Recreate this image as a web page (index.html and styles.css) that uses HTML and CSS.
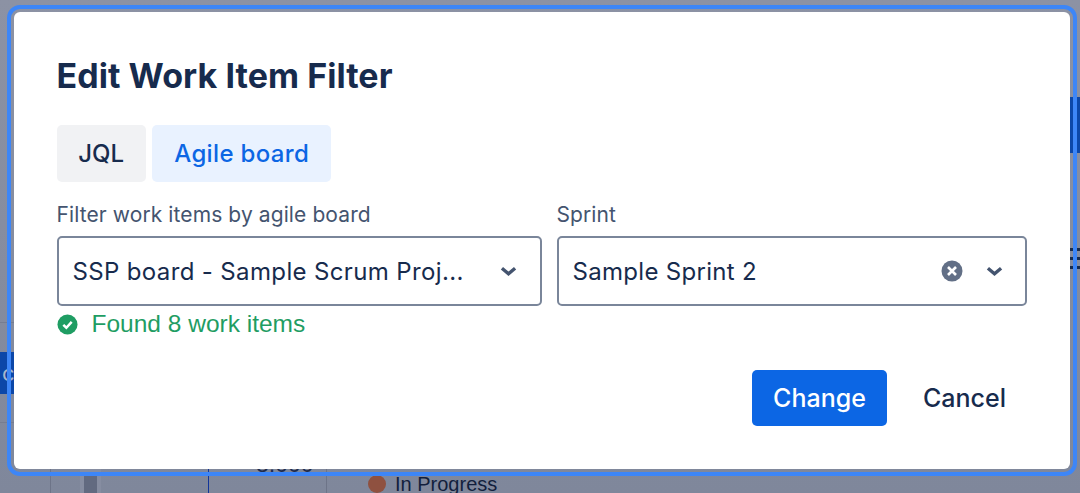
FILE: index.html
```html
<!DOCTYPE html>
<html lang="en">
<head>
<meta charset="utf-8">
<title>Edit Work Item Filter</title>
<link rel="stylesheet" href="styles.css">
</head>
<body>
<div class="backdrop" aria-hidden="true">
  <div class="bg-band bg-band-left"><span>c</span></div>
  <div class="bg-band bg-band-right"></div>
  <div class="bg-rule bg-rule-a"></div>
  <div class="bg-rule bg-rule-b"></div>
  <div class="bg-menu"><i></i><i></i><i></i></div>
  <div class="bg-grid"></div>
  <div class="bg-bar"></div>
  <div class="bg-axis"></div>
  <div class="bg-tick"></div>
  <div class="bg-value">8,000</div>
  <div class="bg-legend"><i></i>In Progress</div>
</div>
<section class="modal">
  <h1 class="title">Edit Work Item Filter</h1>
  <div class="tabs">
    <button class="tab">JQL</button>
    <button class="tab tab-active">Agile board</button>
  </div>
  <div class="fields">
    <div class="field field-board">
      <label class="label">Filter work items by agile board</label>
      <div class="select">
        <span class="value value-board">SSP board - Sample Scrum Proj...</span>
        <svg class="chevron" viewBox="0 0 16 10"><path d="M1.8 2 8 7.2 14.2 2" fill="none" stroke="#44546f" stroke-width="3.2"/></svg>
      </div>
      <div class="status">
        <svg class="status-icon" viewBox="0 0 22 22"><circle cx="11" cy="11" r="10.5" fill="#1f9d63"/><path d="M6.6 11.3 9.8 14.4 15.4 8.2" fill="none" stroke="#fff" stroke-width="2.6"/></svg>
        <span>Found 8 work items</span>
      </div>
    </div>
    <div class="field field-sprint">
      <label class="label">Sprint</label>
      <div class="select">
        <span class="value">Sample Sprint 2</span>
        <svg class="clear" viewBox="0 0 22 22"><circle cx="11" cy="11" r="10.5" fill="#626f86"/><path d="M7 7l8 8M15 7l-8 8" fill="none" stroke="#fff" stroke-width="2.6"/></svg>
        <svg class="chevron" viewBox="0 0 16 10"><path d="M1.8 2 8 7.2 14.2 2" fill="none" stroke="#44546f" stroke-width="3.2"/></svg>
      </div>
    </div>
  </div>
  <div class="actions">
    <button class="btn btn-primary">Change</button>
    <button class="btn btn-subtle">Cancel</button>
  </div>
</section>
</body>
</html>
```
FILE: styles.css
```css
* { box-sizing: border-box; }
html, body { margin: 0; height: 100%; }
body {
  position: relative;
  width: 1080px;
  height: 493px;
  overflow: hidden;
  background: #8a91a3;
  font-family: Inter, "Liberation Sans", sans-serif;
  color: #172b4d;
}
.backdrop { position: absolute; inset: 0; background: linear-gradient(#8c92a4, #7f879b); }
.bg-band { position: absolute; background: #0c47a8; }
.bg-band-left { left: 0; top: 352px; width: 14px; height: 42px; color: #a9b6cc; font-size: 22px; line-height: 42px; }
.bg-band-left span { margin-left: 2px; }
.bg-band-right { right: 0; top: 97px; width: 10px; height: 56px; }
.bg-rule { position: absolute; left: 0; width: 14px; height: 1px; background: #767d90; }
.bg-rule-a { top: 322px; }
.bg-rule-b { top: 422px; }
.bg-menu { position: absolute; right: 0; top: 248px; width: 10px; display: flex; flex-direction: column; gap: 6px; }
.bg-menu i { display: block; height: 3px; background: #172b4d; }
.bg-grid { position: absolute; left: 50px; top: 465px; width: 1px; height: 28px; background: #6d7488; }
.bg-bar { position: absolute; left: 80px; top: 465px; width: 21px; height: 28px; padding: 0 4px; background: #868da1; }
.bg-bar::after { content: ""; display: block; margin: 10px 0 0; height: 18px; background: #626a80; }
.bg-axis { position: absolute; left: 208px; top: 465px; width: 1px; height: 28px; background: #11349a; }
.bg-tick { position: absolute; left: 326px; top: 465px; width: 1px; height: 28px; background: #6d7488; }
.bg-value { position: absolute; left: 256px; top: 451px; font: 23px "Liberation Sans", sans-serif; color: #1f2c4d; }
.bg-legend { position: absolute; left: 368px; top: 472px; display: flex; align-items: center; gap: 9px; font: 20px/24px "Liberation Sans", sans-serif; color: #121f3d; }
.bg-legend i { width: 18px; height: 18px; border-radius: 50%; background: #8f5140; }

.modal {
  position: absolute;
  left: 14px;
  top: 12px;
  width: 1056px;
  height: 457px;
  padding: 42px 43px 0 42.5px;
  background: #fff;
  border-radius: 6px;
  outline: 4px solid #3d86f7;
  outline-offset: 3px;
}
.title { margin: 0; font-size: 34px; line-height: 44px; font-weight: 700; letter-spacing: 0.05px; color: #172b4d; }
.tabs { display: flex; gap: 6.5px; margin-top: 27px; }
.tab {
  height: 57px;
  padding: 0 21.7px;
  border: 0;
  border-radius: 5px;
  font: 500 24px Inter, sans-serif;
  color: #172b4d;
  background: #f1f2f4;
}
.tab-active { padding: 0 22px; letter-spacing: 0.35px; color: #0c66e4; background: #e9f2ff; }
.fields { display: flex; gap: 15px; margin-top: 19px; }
.field-board { width: 485px; flex: none; }
.field-sprint { width: 470.5px; flex: none; }
.label { display: block; font-size: 21px; line-height: 28px; letter-spacing: 0.1px; color: #44546f; }
.select {
  display: flex;
  align-items: center;
  height: 70px;
  margin-top: 7px;
  padding: 0 22.5px 0 14px;
  border: 2px solid #7a869a;
  border-radius: 5px;
}
.value { flex: 1; font-size: 24px; letter-spacing: 0.3px; white-space: nowrap; }
.value-board { letter-spacing: 0.36px; }
.chevron { width: 17px; height: 11px; }
.clear { width: 22px; height: 22px; margin-right: 23px; }
.status { display: flex; align-items: center; gap: 14px; margin-top: 3px; font: 24.5px/30px "Liberation Sans", sans-serif; color: #1f9d63; }
.status-icon { width: 21px; height: 21px; flex: none; }
.actions { display: flex; justify-content: flex-end; gap: 15px; margin-top: 31px; }
.btn { height: 56px; border: 0; border-radius: 5px; font: 500 25px Inter, sans-serif; }
.btn-primary { width: 135px; background: #0c66e4; color: #fff; }
.btn-subtle { width: 125px; background: transparent; color: #172b4d; }
```
